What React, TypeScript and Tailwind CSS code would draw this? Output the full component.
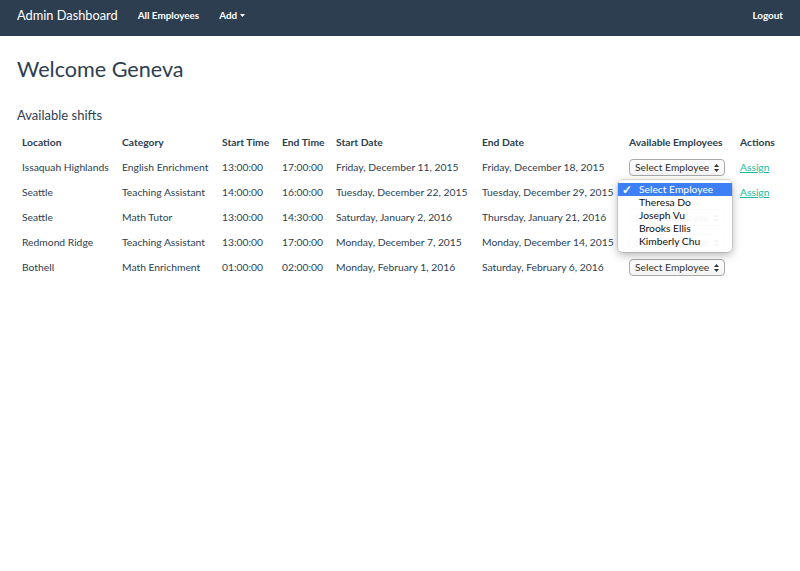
import React from "react";

const rows = [
  ["Issaquah Highlands", "English Enrichment", "13:00:00", "17:00:00", "Friday, December 11, 2015", "Friday, December 18, 2015", true],
  ["Seattle", "Teaching Assistant", "14:00:00", "16:00:00", "Tuesday, December 22, 2015", "Tuesday, December 29, 2015", true],
  ["Seattle", "Math Tutor", "13:00:00", "14:30:00", "Saturday, January 2, 2016", "Thursday, January 21, 2016", false],
  ["Redmond Ridge", "Teaching Assistant", "13:00:00", "17:00:00", "Monday, December 7, 2015", "Monday, December 14, 2015", false],
  ["Bothell", "Math Enrichment", "01:00:00", "02:00:00", "Monday, February 1, 2016", "Saturday, February 6, 2016", false],
] as const;

function SelectBox() {
  return (
    <div className="flex h-[17px] w-[96px] items-center justify-between whitespace-nowrap rounded-[4px] border border-[#a9a9a9] bg-gradient-to-b from-white to-[#f3f3f3] pl-[5px] pr-[5px] text-[10.3px] leading-none text-[#333]">
      <span>Select Employee</span>
      <svg width="5" height="8" viewBox="0 0 5 8">
        <path d="M2.5 0 L5 3 L0 3 Z" fill="#333" />
        <path d="M2.5 8 L5 5 L0 5 Z" fill="#333" />
      </svg>
    </div>
  );
}

function Dropdown() {
  const items = ["Theresa Do", "Joseph Vu", "Brooks Ellis", "Kimberly Chu"];
  return (
    <div className="absolute left-[-11px] top-[-13px] z-10 w-[114px] whitespace-nowrap rounded-[5px] bg-white/95 pb-[4px] pt-[3px] text-[10.3px] leading-[13px] text-[#111] shadow-[0_3px_10px_rgba(0,0,0,0.3)] ring-1 ring-black/10">
      <div className="flex h-[13px] items-center bg-[#3d7ff4] text-white">
        <span className="w-[21px] pl-[4px] text-[12px] font-bold">✓</span>
        <span>Select Employee</span>
      </div>
      {items.map((n) => (
        <div key={n} className="flex h-[13px] items-center">
          <span className="w-[21px]" />
          <span>{n}</span>
        </div>
      ))}
    </div>
  );
}

export default function App() {
  return (
    <div className="min-h-[571px] bg-white text-[#2c3e50]" style={{ fontFamily: "Lato, 'Open Sans', sans-serif" }}>
      <nav className="flex h-[36px] items-center bg-[#2c3e50] px-[17px] pb-[5px] text-white">
        <span className="text-[12.8px]">Admin Dashboard</span>
        <span className="ml-[20px] text-[9.9px] font-bold">All Employees</span>
        <span className="ml-[20px] flex items-center text-[9.9px] font-bold">
          Add
          <svg className="ml-[3px]" width="5" height="3" viewBox="0 0 5 3">
            <path d="M0 0 L5 0 L2.5 3 Z" fill="white" />
          </svg>
        </span>
        <span className="ml-auto text-[9.9px] font-bold">Logout</span>
      </nav>
      <div className="px-[17px]">
        <h1 className="mt-[20px] text-[21.6px] leading-[26px]">Welcome Geneva</h1>
        <h3 className="mt-[25px] text-[13px] leading-[16px]">Available shifts</h3>
        <table className="mt-[7px] w-[766px] table-fixed border-collapse text-[10.3px]">
          <colgroup>
            <col className="w-[100px]" />
            <col className="w-[100px]" />
            <col className="w-[60px]" />
            <col className="w-[54px]" />
            <col className="w-[146px]" />
            <col className="w-[147px]" />
            <col className="w-[111px]" />
            <col className="w-[48px]" />
          </colgroup>
          <thead>
            <tr className="h-[25px] text-left font-bold">
              {["Location", "Category", "Start Time", "End Time", "Start Date", "End Date", "Available Employees", "Actions"].map((h) => (
                <th key={h} className="whitespace-nowrap px-[5px] font-bold">{h}</th>
              ))}
            </tr>
          </thead>
          <tbody>
            {rows.map((r, i) => (
              <tr key={i} className="h-[25px]">
                {r.slice(0, 6).map((c, j) => (
                  <td key={j} className="whitespace-nowrap px-[5px]">{c as string}</td>
                ))}
                <td className="px-[5px]">
                  <div className="relative">
                    {i === 1 ? <Dropdown /> : <SelectBox />}
                  </div>
                </td>
                <td className="px-[5px]">
                  {r[6] ? <a className="text-[#18bc9c] underline" href="#">Assign</a> : null}
                </td>
              </tr>
            ))}
          </tbody>
        </table>
      </div>
    </div>
  );
}
